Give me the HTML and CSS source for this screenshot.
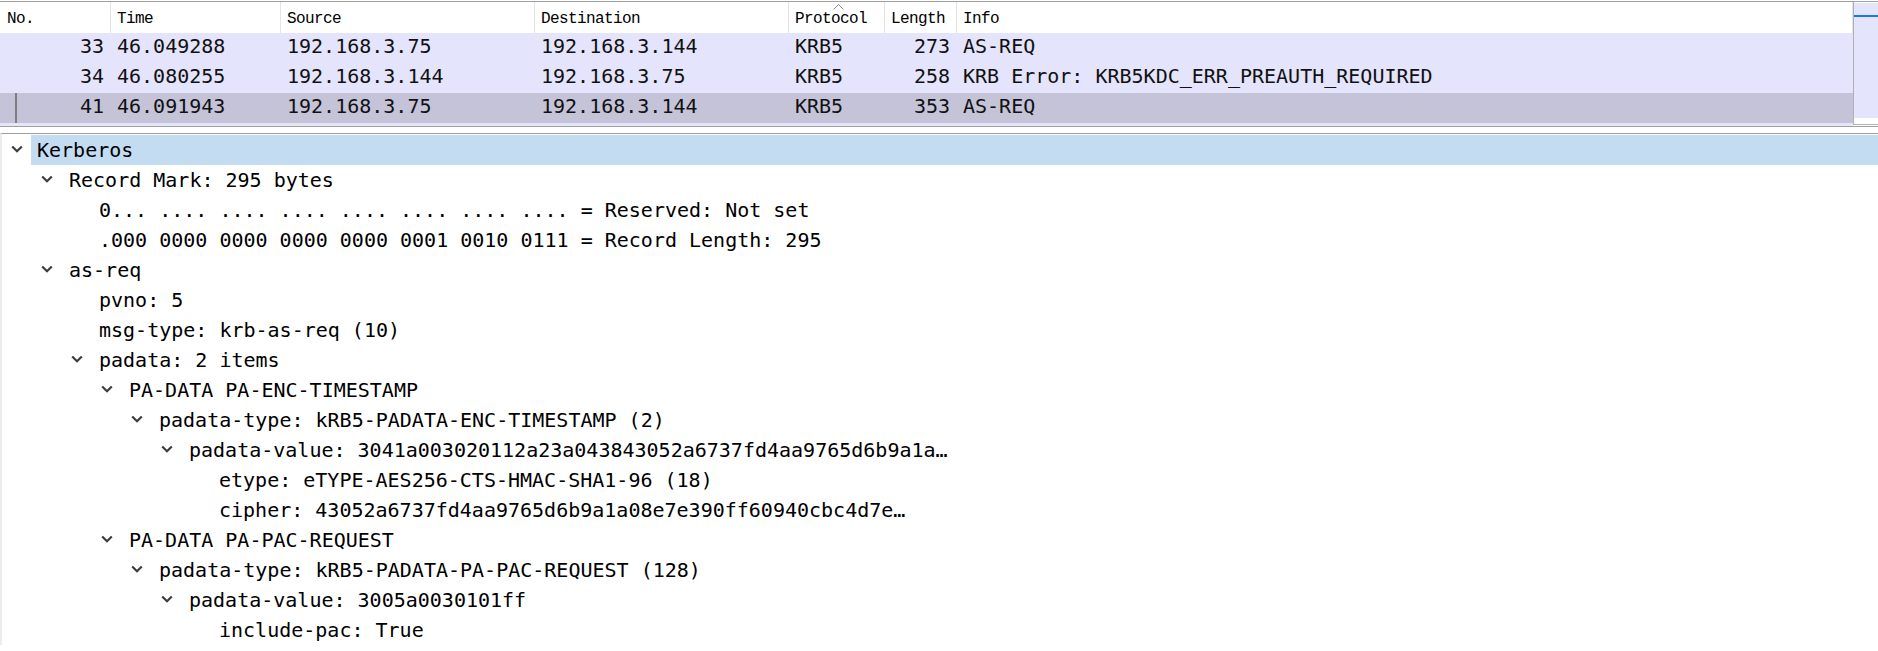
FILE: index.html
```html
<!DOCTYPE html>
<html>
<head>
<meta charset="utf-8">
<title>Wireshark - Kerberos</title>
<link rel="stylesheet" href="styles.css">
</head>
<body>
<div class="top-pane">
  <div class="packet-list">
    <div class="plist-header">
      <div class="hcell">No.</div>
      <div class="hcell">Time</div>
      <div class="hcell">Source</div>
      <div class="hcell">Destination</div>
      <div class="hcell">Protocol<svg class="sort-caret" width="11" height="6" viewBox="0 0 11 6"><polyline points="0.5,5.5 5.5,0.5 10.5,5.5" fill="none" stroke="#8a8a8a" stroke-width="1"/></svg></div>
      <div class="hcell">Length</div>
      <div class="hcell">Info</div>
    </div>
    <div class="prow">
      <div class="pcell num">33</div>
      <div class="pcell">46.049288</div>
      <div class="pcell">192.168.3.75</div>
      <div class="pcell">192.168.3.144</div>
      <div class="pcell">KRB5</div>
      <div class="pcell num">273</div>
      <div class="pcell">AS-REQ</div>
    </div>
    <div class="prow">
      <div class="pcell num">34</div>
      <div class="pcell">46.080255</div>
      <div class="pcell">192.168.3.144</div>
      <div class="pcell">192.168.3.75</div>
      <div class="pcell">KRB5</div>
      <div class="pcell num">258</div>
      <div class="pcell">KRB Error: KRB5KDC_ERR_PREAUTH_REQUIRED</div>
    </div>
    <div class="prow selected">
      <div class="pcell num">41</div>
      <div class="pcell">46.091943</div>
      <div class="pcell">192.168.3.75</div>
      <div class="pcell">192.168.3.144</div>
      <div class="pcell">KRB5</div>
      <div class="pcell num">353</div>
      <div class="pcell">AS-REQ</div>
    </div>
    <div class="prow"></div>
  </div>
  <div class="minimap">
    <div class="minimap-fill"><div class="minimap-marker"></div></div>
  </div>
</div>
<div class="splitter"></div>
<div class="tree">
  <div class="trow l0 selected"><span class="toggle"><svg class="chev" width="12" height="8" viewBox="0 0 12 8"><path d="M1.2 1.5 L6 6.2 L10.8 1.5" fill="none" stroke="#3c3c3c" stroke-width="2.2"/></svg></span><span class="label">Kerberos</span></div>
  <div class="trow l1"><span class="toggle"><svg class="chev" width="12" height="8" viewBox="0 0 12 8"><path d="M1.2 1.5 L6 6.2 L10.8 1.5" fill="none" stroke="#3c3c3c" stroke-width="2.2"/></svg></span><span class="label">Record Mark: 295 bytes</span></div>
  <div class="trow l2"><span class="toggle"></span><span class="label">0... .... .... .... .... .... .... .... = Reserved: Not set</span></div>
  <div class="trow l2"><span class="toggle"></span><span class="label">.000 0000 0000 0000 0000 0001 0010 0111 = Record Length: 295</span></div>
  <div class="trow l1"><span class="toggle"><svg class="chev" width="12" height="8" viewBox="0 0 12 8"><path d="M1.2 1.5 L6 6.2 L10.8 1.5" fill="none" stroke="#3c3c3c" stroke-width="2.2"/></svg></span><span class="label">as-req</span></div>
  <div class="trow l2"><span class="toggle"></span><span class="label">pvno: 5</span></div>
  <div class="trow l2"><span class="toggle"></span><span class="label">msg-type: krb-as-req (10)</span></div>
  <div class="trow l2"><span class="toggle"><svg class="chev" width="12" height="8" viewBox="0 0 12 8"><path d="M1.2 1.5 L6 6.2 L10.8 1.5" fill="none" stroke="#3c3c3c" stroke-width="2.2"/></svg></span><span class="label">padata: 2 items</span></div>
  <div class="trow l3"><span class="toggle"><svg class="chev" width="12" height="8" viewBox="0 0 12 8"><path d="M1.2 1.5 L6 6.2 L10.8 1.5" fill="none" stroke="#3c3c3c" stroke-width="2.2"/></svg></span><span class="label">PA-DATA PA-ENC-TIMESTAMP</span></div>
  <div class="trow l4"><span class="toggle"><svg class="chev" width="12" height="8" viewBox="0 0 12 8"><path d="M1.2 1.5 L6 6.2 L10.8 1.5" fill="none" stroke="#3c3c3c" stroke-width="2.2"/></svg></span><span class="label">padata-type: kRB5-PADATA-ENC-TIMESTAMP (2)</span></div>
  <div class="trow l5"><span class="toggle"><svg class="chev" width="12" height="8" viewBox="0 0 12 8"><path d="M1.2 1.5 L6 6.2 L10.8 1.5" fill="none" stroke="#3c3c3c" stroke-width="2.2"/></svg></span><span class="label">padata-value: 3041a003020112a23a043843052a6737fd4aa9765d6b9a1a…</span></div>
  <div class="trow l6"><span class="toggle"></span><span class="label">etype: eTYPE-AES256-CTS-HMAC-SHA1-96 (18)</span></div>
  <div class="trow l6"><span class="toggle"></span><span class="label">cipher: 43052a6737fd4aa9765d6b9a1a08e7e390ff60940cbc4d7e…</span></div>
  <div class="trow l3"><span class="toggle"><svg class="chev" width="12" height="8" viewBox="0 0 12 8"><path d="M1.2 1.5 L6 6.2 L10.8 1.5" fill="none" stroke="#3c3c3c" stroke-width="2.2"/></svg></span><span class="label">PA-DATA PA-PAC-REQUEST</span></div>
  <div class="trow l4"><span class="toggle"><svg class="chev" width="12" height="8" viewBox="0 0 12 8"><path d="M1.2 1.5 L6 6.2 L10.8 1.5" fill="none" stroke="#3c3c3c" stroke-width="2.2"/></svg></span><span class="label">padata-type: kRB5-PADATA-PA-PAC-REQUEST (128)</span></div>
  <div class="trow l5"><span class="toggle"><svg class="chev" width="12" height="8" viewBox="0 0 12 8"><path d="M1.2 1.5 L6 6.2 L10.8 1.5" fill="none" stroke="#3c3c3c" stroke-width="2.2"/></svg></span><span class="label">padata-value: 3005a0030101ff</span></div>
  <div class="trow l6"><span class="toggle"></span><span class="label">include-pac: True</span></div>
</div>
</body>
</html>
```
FILE: styles.css
```css
* { box-sizing: border-box; }

html, body {
  margin: 0;
  padding: 0;
  background: #ffffff;
  overflow: hidden;
}

body {
  font-family: "DejaVu Sans Mono", "Liberation Mono", monospace;
  font-size: 20px;
  color: #111111;
}

/* ---------- packet list pane ---------- */
.top-pane {
  display: flex;
  margin-top: 1px;
  height: 126px;
  border-top: 1px solid #a0a0a0;
  border-bottom: 1px solid #a0a0a0;
  overflow: hidden;
}

.packet-list {
  flex: 1;
  min-width: 0;
  overflow: hidden;
}

.plist-header,
.prow {
  display: grid;
  grid-template-columns: 110px 170px 254px 254px 96px 72px 1fr;
}

.plist-header {
  height: 31px;
  background: #ffffff;
  font-family: "Liberation Mono", monospace;
  font-size: 16px;
  letter-spacing: -0.6px;
  color: #000000;
}

.hcell {
  position: relative;
  padding: 4px 0 0 6px;
  line-height: 27px;
  border-left: 1px solid #e4e4e4;
  white-space: nowrap;
}

.hcell:first-child {
  border-left: none;
  padding-left: 7px;
}

.hcell:last-child {
  border-right: 1px solid #e4e4e4;
}

.sort-caret {
  position: absolute;
  left: 44px;
  top: 2px;
}

.prow {
  height: 30px;
  line-height: 26px;
  padding-bottom: 4px;
  background: #e4e4fc;
  white-space: nowrap;
}

.prow.selected {
  position: relative;
  background: #c5c3d8;
}

.prow.selected::before {
  content: "";
  position: absolute;
  left: 15px;
  top: 0;
  bottom: 0;
  width: 2px;
  background: #7e7e7e;
}

.pcell {
  padding-left: 7px;
  overflow: hidden;
}

.pcell.num {
  padding-left: 0;
  padding-right: 6px;
  text-align: right;
}

/* ---------- minimap / scrollbar ---------- */
.minimap {
  flex: none;
  width: 25px;
  height: 123px;
  border-left: 1px solid #b0b0b0;
  border-bottom: 1px solid #b4b4b4;
  background: #ffffff;
}

.minimap-fill {
  position: relative;
  margin-top: 1px;
  height: 115px;
  background: #e4e4fc;
}

.minimap-marker {
  position: absolute;
  left: 0;
  right: 0;
  top: 12px;
  height: 2px;
  background: #1a7bd8;
}

/* ---------- splitter ---------- */
.splitter {
  height: 6px;
  background: #ffffff;
}

/* ---------- details tree ---------- */
.tree {
  border-top: 1px solid #a0a0a0;
  border-left: 2px solid #ededed;
  padding-top: 1px;
  color: #000000;
}

.trow {
  display: flex;
  height: 30px;
  line-height: 30px;
  white-space: nowrap;
}

.toggle {
  flex: none;
  width: 29px;
  display: flex;
  align-items: center;
  padding-left: 9px;
}

.chev {
  display: block;
  margin-top: -3px;
}

.label {
  flex: 1;
  padding-left: 6px;
}

.trow.selected .label {
  background: #c4dcf2;
}

.l1 { padding-left: 30px; }
.l2 { padding-left: 60px; }
.l3 { padding-left: 90px; }
.l4 { padding-left: 120px; }
.l5 { padding-left: 150px; }
.l6 { padding-left: 180px; }

.l1 .toggle, .l2 .toggle, .l3 .toggle,
.l4 .toggle, .l5 .toggle, .l6 .toggle {
  width: 31px;
  padding-left: 9px;
}
```
